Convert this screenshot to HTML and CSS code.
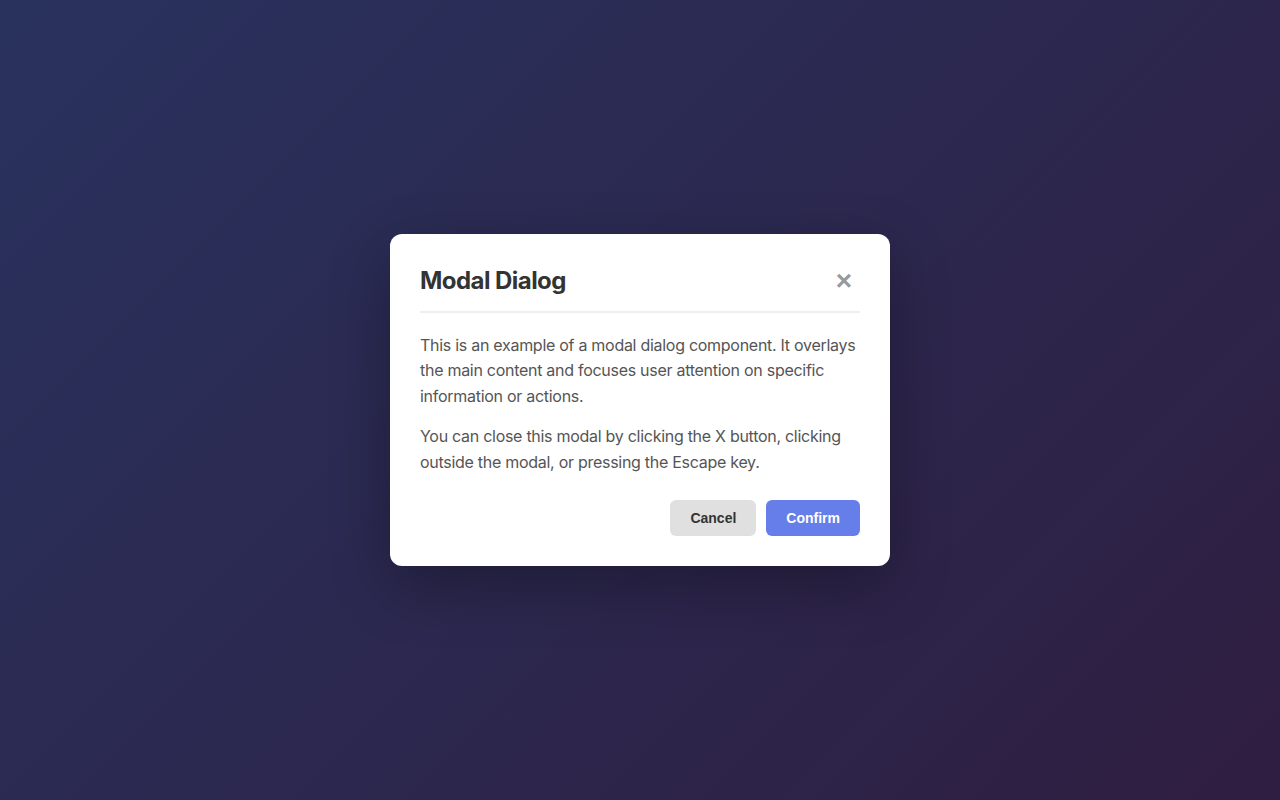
FILE: index.html
```html
<!DOCTYPE html>
<html lang="en">
<head>
<meta charset="utf-8">
<title>Modal Dialog</title>
<link rel="stylesheet" href="styles.css">
</head>
<body>
<div class="backdrop">
  <div class="modal" role="dialog" aria-labelledby="modal-title">
    <div class="modal-header">
      <h2 id="modal-title" class="modal-title">Modal Dialog</h2>
      <button class="close-btn" aria-label="Close">&times;</button>
    </div>
    <div class="modal-body">
      <p>This is an example of a modal dialog component. It overlays the main content and focuses user attention on specific information or actions.</p>
      <p>You can close this modal by clicking the X button, clicking outside the modal, or pressing the Escape key.</p>
    </div>
    <div class="modal-footer">
      <button class="btn btn-cancel">Cancel</button>
      <button class="btn btn-confirm">Confirm</button>
    </div>
  </div>
</div>
</body>
</html>
```
FILE: styles.css
```css
* { box-sizing: border-box; }
html, body { margin: 0; padding: 0; height: 100%; }
body {
  font-family: Inter, "Noto Sans", sans-serif;
  background: linear-gradient(135deg, #667eea 0%, #764ba2 100%);
}
.backdrop {
  height: 100vh;
  background: rgba(0, 0, 0, 0.6);
  display: flex;
  align-items: center;
  justify-content: center;
}
.modal {
  width: 500px;
  background: #fff;
  border-radius: 12px;
  padding: 30px;
  box-shadow: 0 20px 60px rgba(0, 0, 0, 0.3);
}
.modal-header {
  display: flex;
  align-items: center;
  justify-content: space-between;
  padding-top: 1px;
  padding-bottom: 14px;
  border-bottom: 2px solid #eee;
  margin-bottom: 20px;
}
.modal-title {
  margin: 0;
  font-size: 24px;
  font-weight: 700;
  line-height: 32px;
  color: #333;
  letter-spacing: -0.55px;
}
.close-btn {
  background: none;
  border: none;
  padding: 0 8px;
  font-family: "Liberation Sans", Arial, sans-serif;
  font-size: 28px;
  font-weight: 700;
  line-height: 30px;
  color: #999;
  cursor: pointer;
}
.modal-body p {
  margin: 0 0 15px;
  font-size: 16px;
  line-height: 25.6px;
  color: #555;
  letter-spacing: -0.28px;
}
.modal-body p:last-child { margin-bottom: 0; }
.modal-footer {
  display: flex;
  justify-content: flex-end;
  gap: 10px;
  margin-top: 25px;
}
.btn {
  border: none;
  border-radius: 6px;
  padding: 10px 20px;
  font-family: "Liberation Sans", Arial, sans-serif;
  font-size: 14px;
  font-weight: 700;
  line-height: 16px;
  cursor: pointer;
}
.btn-cancel { background: #e0e0e0; color: #333; }
.btn-confirm { background: #667eea; color: #fff; }
```
